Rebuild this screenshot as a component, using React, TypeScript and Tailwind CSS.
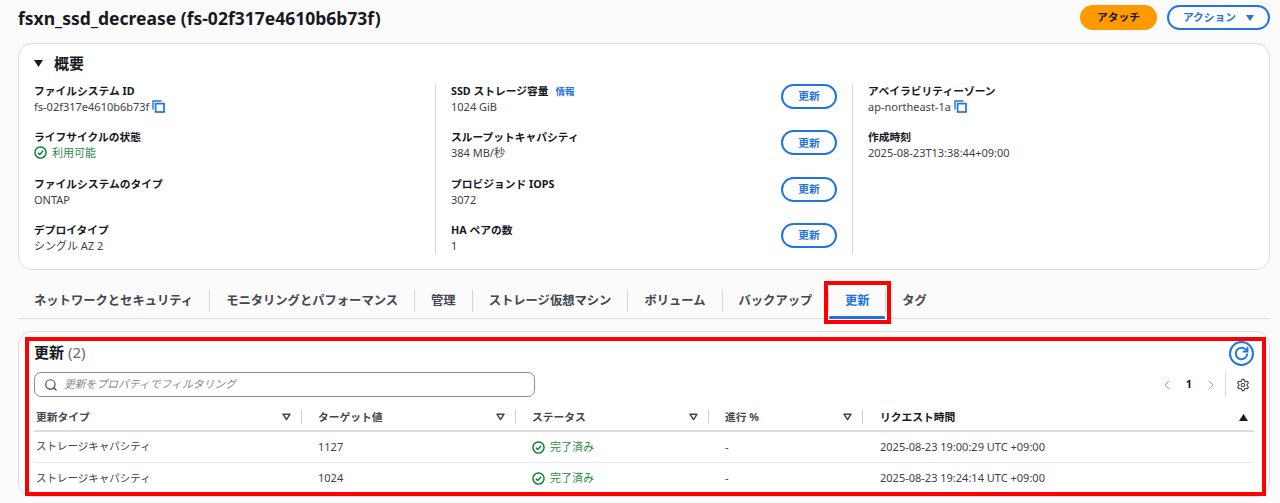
import { ChevronLeft, ChevronRight, Search, Settings } from "lucide-react";

const font = "font-['Noto_Sans','Noto_Sans_CJK_JP',sans-serif]";

function CopyIcon() {
  return (
    <svg width="13" height="13" viewBox="0 0 13 13" fill="none" className="shrink-0 text-[#1f74e0]">
      <path d="M1 9.5V1h8.5" stroke="currentColor" strokeWidth="1.4" />
      <rect x="3.6" y="3.6" width="8.4" height="8.4" stroke="currentColor" strokeWidth="1.7" />
    </svg>
  );
}

function CheckIcon() {
  return (
    <svg width="13" height="13" viewBox="0 0 14 14" fill="none" className="shrink-0 text-[#037f2d]">
      <circle cx="7" cy="7" r="6" stroke="currentColor" strokeWidth="1.5" />
      <path d="M4.2 7.2l2 2 3.6-4" stroke="currentColor" strokeWidth="1.5" />
    </svg>
  );
}

function FilterCaret() {
  return (
    <svg width="9" height="8" viewBox="0 0 9 8" fill="none" className="shrink-0 text-[#424650]">
      <path d="M1 1.2h7L4.5 6.6z" stroke="currentColor" strokeWidth="1.5" strokeLinejoin="round" />
    </svg>
  );
}

function Field({ label, children, info }: { label: string; children: React.ReactNode; info?: boolean }) {
  return (
    <div className="h-[46.3px]">
      <div className="flex items-center gap-[7px] text-[10.75px] leading-[15px] font-bold text-[#16191f]">
        {label}
        {info && <span className="text-[9.5px] text-[#1f74e0]">情報</span>}
      </div>
      <div className="flex items-center gap-[3px] text-[11px] leading-[15px] text-[#3d4149]">{children}</div>
    </div>
  );
}

function UpdateField({ label, value, info }: { label: string; value: string; info?: boolean }) {
  return (
    <div className="flex items-start justify-between pr-[15px]">
      <Field label={label} info={info}>
        {value}
      </Field>
      <button className="h-[25px] w-[56px] rounded-full border-2 border-[#1f74e0] bg-white text-[10.75px] font-bold text-[#1f74e0]">
        更新
      </button>
    </div>
  );
}

const tabs = ["ネットワークとセキュリティ", "モニタリングとパフォーマンス", "管理", "ストレージ仮想マシン", "ボリューム", "バックアップ"];

const columns = [
  { name: "更新タイプ", width: "w-[268px] pl-[2px]" },
  { name: "ターゲット値", width: "w-[214px] pl-[16px]" },
  { name: "ステータス", width: "w-[193px] pl-[16px]" },
  { name: "進行 %", width: "w-[154px] pl-[16px]" },
];

const rows = [
  { type: "ストレージキャパシティ", target: "1127", time: "2025-08-23 19:00:29 UTC +09:00" },
  { type: "ストレージキャパシティ", target: "1024", time: "2025-08-23 19:24:14 UTC +09:00" },
];

export default function App() {
  return (
    <div className={`${font} h-[503px] w-[1280px] overflow-hidden bg-[#fbfbfb] pl-[18px] pr-[10px]`}>
      <div className="flex h-[43px] items-start justify-between">
        <h1 className="pt-[5px] text-[17.5px] leading-[27px] font-bold text-[#16191f]">fsxn_ssd_decrease (fs-02f317e4610b6b73f)</h1>
        <div className="flex gap-[10px] pt-[5px]">
          <button className="h-[25px] w-[77px] rounded-full bg-[#ff9900] text-[10.75px] font-bold text-[#16191f]">アタッチ</button>
          <button className="flex h-[25px] w-[103px] items-center justify-center gap-[10px] rounded-full border-2 border-[#1f74e0] bg-white text-[10.75px] font-bold text-[#1f74e0]">
            アクション
            <svg width="8" height="6" viewBox="0 0 8 6" className="text-[#1f74e0]">
              <path d="M0 0h8L4 6z" fill="currentColor" />
            </svg>
          </button>
        </div>
      </div>

      <section className="h-[227px] rounded-[14px] border border-[#dcdcdf] bg-white pl-[15px]">
        <div className="flex h-[39px] items-center gap-[11px]">
          <svg width="9" height="7" viewBox="0 0 9 7" className="text-[#16191f]">
            <path d="M0 0h9L4.5 7z" fill="currentColor" />
          </svg>
          <h2 className="text-[15px] font-bold text-[#16191f]">概要</h2>
        </div>
        <div className="flex h-[171px]">
          <div className="w-[401px] pt-[1px]">
            <Field label="ファイルシステム ID">
              fs-02f317e4610b6b73f
              <CopyIcon />
            </Field>
            <Field label="ライフサイクルの状態">
              <span className="flex items-center gap-[5px] text-[#2c8c4d]">
                <CheckIcon />
                利用可能
              </span>
            </Field>
            <Field label="ファイルシステムのタイプ">ONTAP</Field>
            <Field label="デプロイタイプ">シングル AZ 2</Field>
          </div>
          <div className="w-[417px] border-l border-[#d9d9dc] pl-[15px] pt-[1px]">
            <UpdateField label="SSD ストレージ容量" value="1024 GiB" info />
            <UpdateField label="スループットキャパシティ" value="384 MB/秒" />
            <UpdateField label="プロビジョンド IOPS" value="3072" />
            <UpdateField label="HA ペアの数" value="1" />
          </div>
          <div className="border-l border-[#d9d9dc] pl-[15px] pt-[1px]">
            <Field label="アベイラビリティーゾーン">
              ap-northeast-1a
              <CopyIcon />
            </Field>
            <Field label="作成時刻">2025-08-23T13:38:44+09:00</Field>
          </div>
        </div>
      </section>

      <nav className="mt-[10px] flex h-[39px] items-start border-b border-[#dcdcdf] text-[12.3px] font-bold text-[#424650]">
        {tabs.map((tab) => (
          <div key={tab} className="mt-[10px] flex h-[22px] items-center border-r border-[#d5d5d8] px-[16px]">
            {tab}
          </div>
        ))}
        <div className="relative mt-[10px] flex h-[22px] w-[57px] items-center justify-center border-r border-[#d5d5d8] text-[#1f74e0]">
          更新
          <span className="absolute left-0 right-0 top-[26px] h-[3px] rounded-full bg-[#1f74e0]" />
          <span className="absolute left-[-5px] right-[-6px] top-[-9px] h-[43px] border-[4px] border-[#ff0000]" />
        </div>
        <div className="mt-[10px] flex h-[22px] items-center pl-[16px]">タグ</div>
      </nav>

      <section className="relative mt-[12px] h-[166px] rounded-[14px] border border-[#dcdcdf] bg-white pl-[15px] pr-[15px]">
        <div className="pointer-events-none absolute left-[6px] right-[3px] top-[5px] h-[159px] border-[4px] border-[#ff0000]" />
        <div className="flex h-[40px] items-start justify-between">
          <h2 className="pt-[10px] text-[15px] leading-[20px] font-bold text-[#16191f]">
            更新 <span className="font-normal text-[#5f6b7a]">(2)</span>
          </h2>
          <button className="mt-[9px] flex h-[25px] w-[25px] items-center justify-center rounded-full border-2 border-[#1f74e0] bg-white text-[#1f74e0]">
            <svg width="17" height="17" viewBox="0 0 16 16" fill="none">
              <path d="M13.4 8a5.4 5.4 0 1 1-1.7-3.9L13.4 6" stroke="currentColor" strokeWidth="1.8" />
              <path d="M13.6 1.6v4.6H9" stroke="currentColor" strokeWidth="1.8" />
            </svg>
          </button>
        </div>
        <div className="flex h-[25px] items-center justify-between">
          <div className="flex h-[25px] w-[501px] items-center gap-[6px] rounded-[7px] border border-[#8c8c94] bg-white pl-[9px]">
            <Search size={14} strokeWidth={2} className="text-[#424650]" />
            <span className="text-[10.8px] italic text-[#7d8998]">更新をプロパティでフィルタリング</span>
          </div>
          <div className="flex items-center text-[#a8a8b0]">
            <ChevronLeft size={16} strokeWidth={1.5} />
            <span className="mx-[11px] text-[10.75px] font-bold text-[#16191f]">1</span>
            <ChevronRight size={16} strokeWidth={1.5} />
            <span className="ml-[6px] mr-[10px] h-[25px] border-l border-[#d9d9dc]" />
            <Settings size={14} strokeWidth={2} className="mr-[4px] text-[#424650]" />
          </div>
        </div>
        <div className="mt-[13px] w-[1220px]">
          <div className="flex h-[22px] items-start border-b-2 border-[#dcdcdf] text-[10.75px] font-bold text-[#424650]">
            {columns.map((col) => (
              <div key={col.name} className={`flex h-[14px] items-center justify-between border-r border-[#cfcfd3] pr-[10px] ${col.width}`}>
                {col.name}
                <FilterCaret />
              </div>
            ))}
            <div className="flex h-[14px] flex-1 items-center justify-between pl-[17px] pr-[6px] text-[#16191f]">
              リクエスト時間
              <svg width="9" height="7" viewBox="0 0 9 7" className="text-[#16191f]">
                <path d="M4.5 0L9 7H0z" fill="currentColor" />
              </svg>
            </div>
          </div>
          {rows.map((row, i) => (
            <div key={row.time} className={`flex h-[31px] items-center text-[11px] text-[#3d4149] ${i === 0 ? "border-b border-[#eaeaec]" : ""}`}>
              <div className="w-[268px] pl-[2px] text-[10.5px]">{row.type}</div>
              <div className="w-[214px] pl-[16px]">{row.target}</div>
              <div className="flex w-[193px] items-center gap-[5px] pl-[16px] text-[#2c8c4d]">
                <CheckIcon />
                完了済み
              </div>
              <div className="w-[154px] pl-[16px]">-</div>
              <div className="pl-[17px]">{row.time}</div>
            </div>
          ))}
        </div>
      </section>
    </div>
  );
}
